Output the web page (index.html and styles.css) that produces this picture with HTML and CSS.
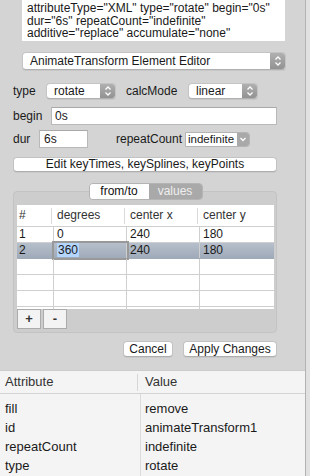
FILE: index.html
```html
<!DOCTYPE html>
<html lang="en">
  <head>
    <meta charset="UTF-8" />
    <meta name="viewport" content="width=device-width, initial-scale=1.0" />
    <title>AnimateTransform Element Editor</title>
    <link rel="stylesheet" href="styles.css">
  </head>
  <body>
    <div class="app">
      <div class="main">
        <div class="editor">
          <div class="source">
            attributeType="XML" type="rotate" begin="0s"<br />
            dur="6s" repeatCount="indefinite"<br />
            additive="replace" accumulate="none"
          </div>

          <div class="popup popup-wide">
            <span class="popup-text">AnimateTransform Element Editor</span>
            <span class="stepper">
              <svg width="14" height="16" viewBox="0 0 14 16"><path d="M4.5 6.5 L7 4 L9.5 6.5 M4.5 9.5 L7 12 L9.5 9.5" fill="none" stroke="#fff" stroke-width="1.3"/></svg>
            </span>
          </div>

          <div class="row row-type">
            <span class="lbl lbl-type">type</span>
            <div class="popup popup-small">
              <span class="popup-text">rotate</span>
              <span class="stepper">
                <svg width="14" height="16" viewBox="0 0 14 16"><path d="M4.5 6.5 L7 4 L9.5 6.5 M4.5 9.5 L7 12 L9.5 9.5" fill="none" stroke="#fff" stroke-width="1.3"/></svg>
              </span>
            </div>
            <span class="lbl lbl-calc">calcMode</span>
            <div class="popup popup-small">
              <span class="popup-text">linear</span>
              <span class="stepper">
                <svg width="14" height="16" viewBox="0 0 14 16"><path d="M4.5 6.5 L7 4 L9.5 6.5 M4.5 9.5 L7 12 L9.5 9.5" fill="none" stroke="#fff" stroke-width="1.3"/></svg>
              </span>
            </div>
          </div>

          <div class="row row-begin">
            <span class="lbl lbl-begin">begin</span>
            <div class="field field-begin">0s</div>
          </div>

          <div class="row row-dur">
            <span class="lbl lbl-dur">dur</span>
            <div class="field field-dur">6s</div>
            <span class="lbl lbl-repeat">repeatCount</span>
            <div class="combo">
              <span class="combo-text">indefinite</span>
              <span class="combo-btn">
                <svg width="12" height="13" viewBox="0 0 12 13"><path d="M3.5 5 L6 7.5 L8.5 5" fill="none" stroke="#fff" stroke-width="1.3"/></svg>
              </span>
            </div>
          </div>

          <div class="push push-keys">Edit keyTimes, keySplines, keyPoints</div>

          <div class="group">
            <div class="tabs">
              <span class="tab tab-on">from/to</span>
              <span class="tab tab-off">values</span>
            </div>
            <div class="grid">
              <div class="tr th-row">
                <span class="th">#</span>
                <span class="th">degrees</span>
                <span class="th">center x</span>
                <span class="th">center y</span>
              </div>
              <div class="tr">
                <span class="td">1</span>
                <span class="td">0</span>
                <span class="td">240</span>
                <span class="td">180</span>
              </div>
              <div class="tr tr-selected">
                <span class="td">2</span>
                <span class="td td-edit"><span class="hilite">360</span></span>
                <span class="td">240</span>
                <span class="td">180</span>
              </div>
              <div class="tr"><span class="td"></span><span class="td"></span><span class="td"></span><span class="td"></span></div>
              <div class="tr"><span class="td"></span><span class="td"></span><span class="td"></span><span class="td"></span></div>
              <div class="tr"><span class="td"></span><span class="td"></span><span class="td"></span><span class="td"></span></div>
              <div class="tr"><span class="td"></span><span class="td"></span><span class="td"></span><span class="td"></span></div>
            </div>
            <div class="tools">
              <span class="tool">+</span>
              <span class="tool">-</span>
            </div>
          </div>

          <div class="actions">
            <span class="push push-cancel">Cancel</span>
            <span class="push push-apply">Apply Changes</span>
          </div>
        </div>

        <div class="attrs">
          <div class="attrs-head">
            <span class="attrs-name">Attribute</span>
            <span class="attrs-value">Value</span>
          </div>
          <div class="attrs-body">
            <div class="attrs-row"><span class="attrs-name">fill</span><span class="attrs-value">remove</span></div>
            <div class="attrs-row"><span class="attrs-name">id</span><span class="attrs-value">animateTransform1</span></div>
            <div class="attrs-row"><span class="attrs-name">repeatCount</span><span class="attrs-value">indefinite</span></div>
            <div class="attrs-row"><span class="attrs-name">type</span><span class="attrs-value">rotate</span></div>
          </div>
        </div>
      </div>
      <div class="edge"></div>
    </div>
  </body>
</html>
```

FILE: styles.css
```css
* {
  margin: 0;
  padding: 0;
  box-sizing: border-box;
}
body {
  font-family: "Liberation Sans", Arial, sans-serif;
  font-size: 12px;
  color: #1a1a1a;
  background: #d4d4d4;
}
.app {
  display: flex;
  width: 310px;
  height: 476px;
  overflow: hidden;
}
.main {
  width: 306px;
  display: flex;
  flex-direction: column;
  border-right: 1px solid #b2b2b2;
}
.edge {
  flex-grow: 1;
  background: #e1e1e1;
}
.editor {
  height: 370px;
  padding: 0 28px 0 13px;
  background: #d4d4d4;
}

/* source text box */
.source {
  height: 41px;
  margin: 0 -8px 0 9px;
  padding: 2px 5px 0;
  background: #fff;
  font-size: 12px;
  line-height: 12.5px;
  overflow: hidden;
  white-space: nowrap;
}

/* popup buttons */
.popup {
  display: flex;
  align-items: center;
  background: #fff;
  border: 1px solid #c4c4c4;
  border-bottom-color: #b0b0b0;
  border-radius: 4px;
  overflow: hidden;
  box-shadow: 0 1px 0 rgba(0, 0, 0, 0.06);
}
.popup-text {
  flex-grow: 1;
  padding-left: 7px;
  white-space: nowrap;
}
.stepper {
  display: flex;
  align-items: center;
  justify-content: center;
  width: 15px;
  height: 100%;
  background: linear-gradient(#b0b0b0, #929292);
}
.popup-wide {
  height: 18px;
  margin: 11px -9px 0 9px;
}
.popup-small {
  width: 70px;
  height: 16px;
}

/* form rows */
.row {
  display: flex;
  align-items: center;
}
.row-type {
  margin-top: 13px;
  height: 16px;
}
.row-begin {
  margin-top: 8px;
  height: 18px;
}
.row-dur {
  margin-top: 5px;
  height: 18px;
}
.lbl {
  white-space: nowrap;
}
.lbl-type {
  width: 33px;
}
.lbl-calc {
  width: 62px;
  margin-left: 10px;
}
.lbl-begin {
  width: 38px;
}
.lbl-dur {
  width: 26px;
}
.lbl-repeat {
  width: 69px;
  margin-left: 28px;
}
.field {
  height: 18px;
  line-height: 16px;
  background: #fff;
  border: 1px solid #b9b9b9;
  border-top-color: #a9a9a9;
}
.field-begin {
  flex-grow: 1;
  padding-left: 3px;
}
.field-dur {
  width: 49px;
  padding-left: 4px;
}
.combo {
  display: flex;
  width: 65px;
  height: 15px;
  background: #fff;
  border: 1px solid #b4b4b4;
  border-radius: 0 3px 3px 0;
  overflow: hidden;
}
.combo-text {
  flex-grow: 1;
  padding-left: 2px;
  font-size: 11.5px;
  line-height: 13px;
  white-space: nowrap;
  overflow: hidden;
}
.combo-btn {
  display: flex;
  flex-shrink: 0;
  align-items: center;
  justify-content: center;
  width: 12px;
  background: #a9a9a9;
}

/* push buttons */
.push {
  display: block;
  text-align: center;
  background: #fff;
  border: 1px solid #c2c2c2;
  border-bottom-color: #aeaeae;
  border-radius: 4px;
  box-shadow: 0 1px 0 rgba(0, 0, 0, 0.05);
  white-space: nowrap;
}
.push-keys {
  margin-top: 9px;
  height: 15px;
  line-height: 13px;
}

/* from/to values group */
.group {
  margin-top: 19px;
  padding: 0 2px 3px 3px;
  background: #cdcdcd;
  border: 1px solid #c3c3c3;
  border-radius: 4px;
}
.tabs {
  display: flex;
  width: 114px;
  height: 17px;
  margin: -9px auto 0;
  border: 1px solid #b4b4b4;
  border-radius: 4px;
  overflow: hidden;
  font-size: 12px;
  line-height: 15px;
}
.tab {
  flex-grow: 1;
  text-align: center;
}
.tab-on {
  background: #fff;
  color: #111;
  width: 59px;
  flex-grow: 0;
}
.tab-off {
  background: #a9a9a9;
  color: #efefef;
}
.grid {
  margin-top: 5px;
  height: 104px;
  overflow: hidden;
  background: #fff;
}
.tr {
  display: grid;
  grid-template-columns: 37px 73px 73px 1fr;
  height: 16px;
  border-bottom: 1px solid #cfcfcf;
  line-height: 15px;
}
.th-row {
  height: 22px;
  line-height: 21px;
  color: #333;
}
.th {
  padding-left: 2px;
  background: linear-gradient(#dadada, #dadada) right 2px center / 1px 16px no-repeat;
}
.th:first-child,
.td:first-child {
  padding-left: 2px;
}
.th + .th,
.td + .td {
  padding-left: 3px;
}
.td {
  border-right: 1px solid #cfcfcf;
}
.td:last-child,
.th:last-child {
  border-right: none;
  background: none;
}
.tr-selected {
  background: linear-gradient(#b6bfcb, #9faab9);
  border-bottom-color: #9faab9;
}
.td-edit {
  outline: 2px solid #999;
  outline-offset: 0;
}
.hilite {
  background: #b4d5fe;
  padding: 0 1px;
}
.tools {
  display: flex;
  gap: 2px;
  height: 20px;
}
.tool {
  width: 24px;
  text-align: center;
  background: #f3f3f3;
  border: 1px solid #ababab;
  font-size: 13px;
  font-weight: bold;
  line-height: 18px;
  color: #333;
}

/* bottom buttons */
.actions {
  display: flex;
  justify-content: flex-end;
  gap: 10px;
  margin-top: 8px;
  height: 16px;
}
.actions .push {
  height: 16px;
  line-height: 14px;
}
.push-cancel {
  width: 50px;
}
.push-apply {
  width: 94px;
}

/* attribute list */
.attrs {
  flex-grow: 1;
  background: #f4f4f4;
  border-top: 1px solid #cbcbcb;
  font-size: 13px;
}
.attrs-head {
  display: flex;
  height: 23px;
  line-height: 22px;
  border-bottom: 1px solid #d3d3d3;
  color: #333;
}
.attrs-head .attrs-name {
  background: linear-gradient(#d6d6d6, #d6d6d6) right 3px center / 1px 17px no-repeat;
  border-right: none;
}
.attrs-body {
  padding-top: 5px;
  height: 100%;
  background: linear-gradient(#dcdcdc, #dcdcdc) 140px 0 / 1px 100% no-repeat;
}
.attrs-row {
  display: flex;
  height: 19px;
  line-height: 19px;
}
.attrs-name {
  width: 141px;
  padding-left: 5px;
  border-right: 1px solid #dcdcdc;
}
.attrs-value {
  padding-left: 4px;
}
```
